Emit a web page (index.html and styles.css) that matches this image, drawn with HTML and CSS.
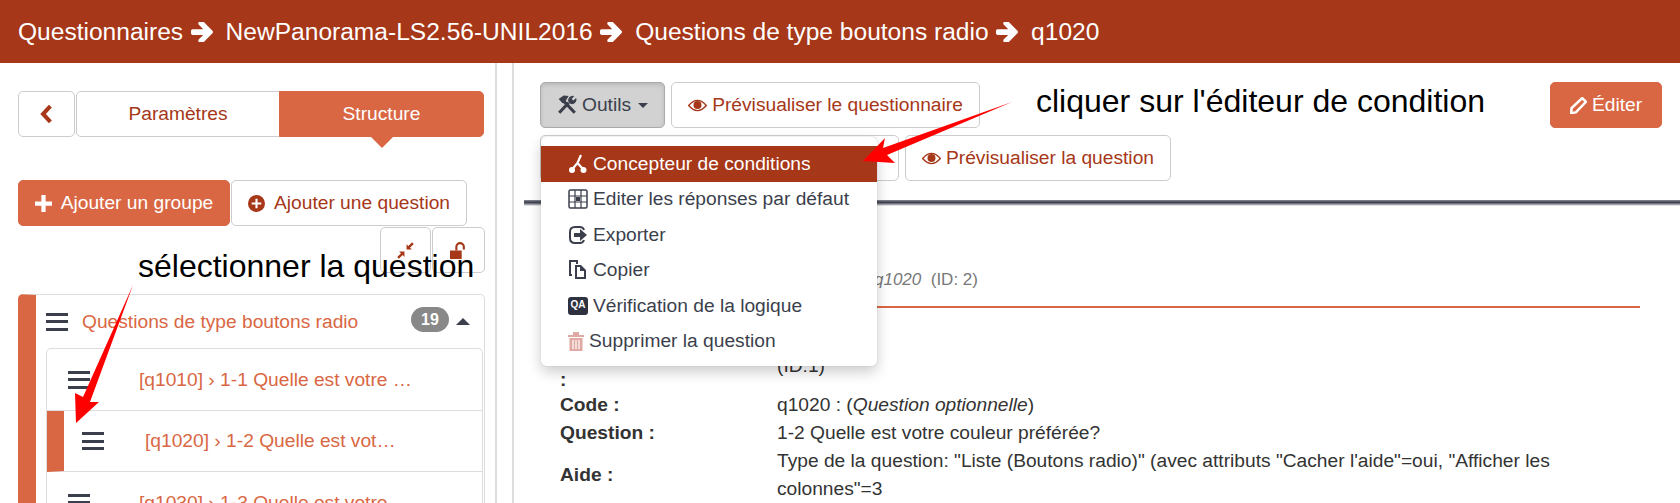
FILE: index.html
```html
<!DOCTYPE html>
<html lang="fr">
<head>
    <meta charset="UTF-8">
    <title>Questionnaires - q1020</title>
    <link rel="stylesheet" href="styles.css">
</head>

<body>
    <!-- fil d'ariane -->
    <header class="crumbs">
        <a>Questionnaires</a>
        <svg class="crumb-arrow" viewBox="64 192 1536 1280"><path d="M1600 960q0 54-37 91l-651 651q-39 37-91 37-51 0-90-37l-75-75q-38-38-38-91t38-91l293-293h-704q-52 0-84.5-37.5t-32.5-90.5v-128q0-53 32.5-90.5t84.5-37.5h704l-293-294q-38-36-38-90t38-90l75-75q38-38 90-38 53 0 91 38l651 651q37 35 37 90z" transform="translate(0 -128)"/></svg>
        <a>NewPanorama-LS2.56-UNIL2016</a>
        <svg class="crumb-arrow" viewBox="64 192 1536 1280"><path d="M1600 960q0 54-37 91l-651 651q-39 37-91 37-51 0-90-37l-75-75q-38-38-38-91t38-91l293-293h-704q-52 0-84.5-37.5t-32.5-90.5v-128q0-53 32.5-90.5t84.5-37.5h704l-293-294q-38-36-38-90t38-90l75-75q38-38 90-38 53 0 91 38l651 651q37 35 37 90z" transform="translate(0 -128)"/></svg>
        <a>Questions de type boutons radio</a>
        <svg class="crumb-arrow" viewBox="64 192 1536 1280"><path d="M1600 960q0 54-37 91l-651 651q-39 37-91 37-51 0-90-37l-75-75q-38-38-38-91t38-91l293-293h-704q-52 0-84.5-37.5t-32.5-90.5v-128q0-53 32.5-90.5t84.5-37.5h704l-293-294q-38-36-38-90t38-90l75-75q38-38 90-38 53 0 91 38l651 651q37 35 37 90z" transform="translate(0 -128)"/></svg>
        <a>q1020</a>
    </header>

    <div class="page">
        <!-- colonne de gauche -->
        <aside class="side">
            <div class="tabs">
                <button class="btn btn-back">
                    <svg class="ico ico-back" viewBox="0 0 12 16"><path d="M9 1 L2.5 8 L9 15" fill="none" stroke="currentColor" stroke-width="3.6"/></svg>
                </button>
                <button class="btn tab">Paramètres</button>
                <button class="btn tab tab-on">Structure</button>
            </div>

            <div class="adds">
                <button class="btn btn-fill btn-group">
                    <svg class="ico" viewBox="0 0 16 16"><path d="M6 0h4v6h6v4h-6v6h-4v-6h-6v-4h6z" fill="currentColor"/></svg>
                    Ajouter un groupe
                </button>
                <button class="btn btn-question">
                    <svg class="ico" viewBox="0 0 16 16"><circle cx="8" cy="8" r="8" fill="currentColor"/><path d="M7 3.5h2v3.500h3.500v2h-3.500v3.500h-2v-3.500h-3.500v-2h3.500z" fill="#fff"/></svg>
                    Ajouter une question
                </button>
            </div>

            <div class="tree-tools">
                <button class="btn btn-small">
                    <svg class="ico" viewBox="0 0 16 16"><path d="M15 1 L10.500 5.500 M1 15 L5.500 10.500" stroke="currentColor" stroke-width="2.200" fill="none"/><path d="M9 2v5h5zM2 9h5v5z" fill="currentColor"/></svg>
                </button>
                <button class="btn btn-small btn-lock">
                    <svg class="ico" viewBox="0 0 16 16"><path d="M0 8h11v8h-11z" fill="currentColor"/><path d="M6 8v-3.500a3.500 3.500 0 0 1 7 0v2.500" fill="none" stroke="currentColor" stroke-width="2"/></svg>
                </button>
            </div>

            <section class="group">
                <div class="group-head">
                    <span class="bars"></span>
                    <span class="group-title">Questions de type boutons radio</span>
                    <span class="badge">19</span>
                    <span class="caret-up"></span>
                </div>
                <ul class="questions">
                    <li class="q">
                        <span class="bars"></span>
                        <span class="q-label">[q1010] › 1-1 Quelle est votre …</span>
                    </li>
                    <li class="q q-on">
                        <span class="bars"></span>
                        <span class="q-label">[q1020] › 1-2 Quelle est vot…</span>
                    </li>
                    <li class="q">
                        <span class="bars"></span>
                        <span class="q-label">[q1030] › 1-3 Quelle est votre …</span>
                    </li>
                </ul>
            </section>
        </aside>

        <!-- colonne de droite -->
        <main class="main">
            <div class="bar">
                <div class="bar-row">
                    <button class="btn btn-tools">
                        <svg class="ico ico-tools" viewBox="0 0 18 18"><path d="M2 16 L10.500 7 M16 16 L6 5.500" stroke="currentColor" stroke-width="2.800" fill="none"/><path d="M1.500 3.500 L6 0.500 L10.500 1 L8 5 L5 7.500 z" fill="currentColor"/><path d="M10.500 6.500 a4 4 0 0 1 5 -5.500 l-2.300 2.500 l1.500 1.500 l2.500 -2.300 a4 4 0 0 1 -5.200 5.200 z" fill="currentColor"/></svg>
                        Outils <span class="caret"></span>
                    </button>
                    <button class="btn btn-line btn-preview">
                        <svg class="ico ico-eye" viewBox="0 0 20 14"><path d="M0.500 7 Q10 -4 19.500 7 Q10 18 0.500 7z" fill="none" stroke="currentColor" stroke-width="1.500"/><circle cx="10" cy="6.500" r="4.300" fill="currentColor"/></svg>
                        Prévisualiser le questionnaire
                    </button>
                    <button class="btn btn-fill btn-edit">
                        <svg class="ico" viewBox="0 0 16 16"><path d="M11.500 1 L15 4.500 L5.500 14.500 L1 15 L1.500 10.500 z" fill="none" stroke="currentColor" stroke-width="2.400"/></svg>
                        Éditer
                    </button>
                </div>
                <div class="bar-row">
                    <button class="btn btn-line btn-hidden"></button>
                    <button class="btn btn-line btn-preview-q">
                        <svg class="ico ico-eye" viewBox="0 0 20 14"><path d="M0.500 7 Q10 -4 19.500 7 Q10 18 0.500 7z" fill="none" stroke="currentColor" stroke-width="1.500"/><circle cx="10" cy="6.500" r="4.300" fill="currentColor"/></svg>
                        Prévisualiser la question
                    </button>
                </div>
            </div>
            <div class="bar-shadow"></div>

            <h2 class="summary"><em>q1020</em>&nbsp; (ID: 2)</h2>
            <div class="summary-line"></div>

            <dl class="facts">
                <dt class="facts-first">Groupe<br>:</dt>
                <dd class="facts-first">(ID:1)</dd>
                <dt>Code :</dt>
                <dd>q1020 : (<em>Question optionnelle</em>)</dd>
                <dt>Question :</dt>
                <dd>1-2 Quelle est votre couleur préférée?</dd>
                <dt>Aide :</dt>
                <dd>Type de la question: "Liste (Boutons radio)" (avec attributs "Cacher l'aide"=oui, "Afficher les colonnes"=3</dd>
            </dl>

            <!-- menu Outils ouvert -->
            <ul class="menu">
                <li class="menu-item menu-on">
                    <svg class="ico" viewBox="0 0 20 20"><path d="M13 1 L9.500 9 L4.500 15 M9.500 9 L15 15" fill="none" stroke="currentColor" stroke-width="2.200"/><circle cx="4" cy="16" r="3" fill="currentColor"/><circle cx="15.500" cy="16" r="3" fill="currentColor"/></svg>
                    Concepteur de conditions
                </li>
                <li class="menu-item">
                    <svg class="ico" viewBox="0 0 20 20"><rect x="1" y="1" width="18" height="18" rx="1.500" fill="none" stroke="currentColor" stroke-width="1.500"/><path d="M7 1v18M13 1v18M1 7h18M1 13h18" stroke="currentColor" stroke-width="1.200"/><rect x="8" y="8" width="4" height="4" fill="currentColor"/></svg>
                    Editer les réponses par défaut
                </li>
                <li class="menu-item">
                    <svg class="ico" viewBox="0 0 20 20"><path d="M16 5 Q15 2 12 2 H7 Q2 2 2 7 V13 Q2 18 7 18 H12 Q15 18 16 15" fill="none" stroke="currentColor" stroke-width="2"/><path d="M6 8h6v-4l7 6l-7 6v-4h-6z" fill="currentColor"/></svg>
                    Exporter
                </li>
                <li class="menu-item">
                    <svg class="ico" viewBox="0 0 20 20"><path d="M4 15 H2 V1 H9 V4" fill="none" stroke="currentColor" stroke-width="2"/><path d="M7 5 H13 L18 10 V19 H7 z M9 7 V17 H16 V11 H12 V7 z" fill="currentColor"/></svg>
                    Copier
                </li>
                <li class="menu-item">
                    <span class="qa">QA</span>
                    Vérification de la logique
                </li>
                <li class="menu-item menu-trash">
                    <svg class="ico" viewBox="0 0 16 20"><path d="M0 4h16v2h-16zM5 1h6v3h-6z M1.500 7h13v13h-13z" fill="currentColor"/><path d="M5 9v9M8 9v9M11 9v9" stroke="#fff" stroke-width="1.200"/></svg>
                    Supprimer la question
                </li>
            </ul>
        </main>
    </div>

    <!-- annotations de la capture -->
    <p class="note note-left">sélectionner la question</p>
    <p class="note note-right">cliquer sur l'éditeur de condition</p>
    <svg class="arrows" viewBox="0 0 1680 503">
        <polygon points="133,285 90,402 99,402 76,423 75,393 83,397"/>
        <polygon points="1012,102 887,155 895,163 863,161 885,138 883,148"/>
    </svg>
</body></html>
```

FILE: styles.css
```css
html,
body {
    margin: 0;
    padding: 0;
}

body {
    height: 503px;
    overflow: hidden;
    position: relative;
    background-color: #fff;
    color: #333;
    font: 19.200px/24px "Liberation Sans", Arial, sans-serif;
}

ul {
    margin: 0;
    padding: 0;
    list-style: none;
}

/* header */
.crumbs {
    display: flex;
    align-items: center;
    height: 63px;
    padding-left: 18px;
    background-color: #a63718;
    color: #fff;
    font-size: 24.550px;
}

.crumb-arrow {
    flex: none;
    width: 23px;
    height: 20px;
    margin: 0 13px 0 6.500px;
    fill: #fff;
}

.page {
    display: flex;
    height: 440px;
}

/* buttons */
.btn {
    display: flex;
    align-items: center;
    justify-content: center;
    gap: 5px;
    box-sizing: border-box;
    margin: 0;
    padding: 0;
    border: 1px solid #ccc;
    border-radius: 5px;
    background-color: #fff;
    color: #a63718;
    font: 19.200px/24px "Liberation Sans", Arial, sans-serif;
}

.btn-fill {
    border-color: #d96743;
    background-color: #d96743;
    color: #fff;
}

.ico {
    flex: none;
    width: 17px;
    height: 17px;
}

/* left column */
.side {
    flex: none;
    box-sizing: border-box;
    width: 497px;
    padding: 28px 10px 0 18px;
    border-right: 2px solid #ddd;
}

.tabs {
    display: flex;
    height: 46px;
}

.btn-back {
    width: 57px;
    margin-right: 1px;
}

.ico-back {
    width: 14px;
    height: 18px;
}

.tab {
    width: 204px;
    border-radius: 5px 0 0 5px;
}

.tab-on {
    position: relative;
    width: 205px;
    margin-left: -1px;
    border-color: #d96743;
    border-radius: 0 5px 5px 0;
    background-color: #d96743;
    color: #fff;
}

.tab-on::after {
    content: "";
    position: absolute;
    left: 91px;
    top: 45px;
    border: 11px solid transparent;
    border-top-color: #d96743;
    border-bottom: 0;
}

.adds {
    display: flex;
    gap: 1px;
    height: 46px;
    margin-top: 43px;
}

.btn-group {
    width: 212px;
    gap: 9px;
}

.btn-question {
    width: 236px;
    gap: 9px;
}

.tree-tools {
    display: flex;
    justify-content: flex-end;
    gap: 1px;
    height: 46px;
    margin-top: 1px;
}

.btn-small {
    width: 51px;
    border-radius: 5px;
}

.btn-lock {
    width: 53px;
}

.group {
    box-sizing: border-box;
    width: 467px;
    height: 300px;
    margin-top: 21px;
    border: 1px solid #ddd;
    border-left: 18px solid #d96743;
    border-radius: 5px 5px 0 0;
}

.group-head {
    display: flex;
    align-items: center;
    height: 53px;
    padding-left: 10px;
}

.bars {
    flex: none;
    box-sizing: border-box;
    width: 22px;
    height: 18px;
    border-top: 3px solid #3b3f4c;
    border-bottom: 3px solid #3b3f4c;
    position: relative;
}

.bars::after {
    content: "";
    position: absolute;
    left: 0;
    right: 0;
    top: 4.5px;
    height: 3px;
    background-color: #3b3f4c;
}

.group-title {
    margin-left: 14px;
    color: #d96743;
}

.badge {
    box-sizing: border-box;
    width: 38px;
    height: 25px;
    margin: -4px 0 0 auto;
    border-radius: 13px;
    background-color: #888;
    color: #fff;
    font-size: 16px;
    font-weight: bold;
    line-height: 25px;
    text-align: center;
}

.caret-up {
    margin: 0 14px 0 7px;
    border: 7.500px solid transparent;
    border-bottom-color: #3b3f4c;
    border-top: 0;
}

.questions {
    margin-right: 1px;
    border: 1px solid #ddd;
    border-radius: 5px 5px 0 0;
    margin-left: 10px;
}

.q {
    display: flex;
    align-items: center;
    box-sizing: border-box;
    height: 62px;
    padding-left: 21px;
    border-bottom: 1px solid #ddd;
}

.q-on {
    height: 61px;
    padding-left: 18px;
    border-left: 17px solid #d96743;
}

.q-label {
    margin-left: 49px;
    color: #d96743;
}

.q-on .q-label {
    margin-left: 41px;
}

/* right column */
.main {
    flex: 1;
    position: relative;
    margin-left: 15px;
    border-left: 2px solid #ddd;
}

.bar {
    display: flex;
    flex-direction: column;
    gap: 7px;
    height: 137px;
    box-sizing: border-box;
    padding: 19px 18px 0 26px;
}

.bar-row {
    display: flex;
    gap: 6px;
    height: 46px;
}

.btn-tools {
    width: 125px;
    border-color: #aaa;
    background-color: #d2d2d2;
    color: #3b3f4c;
    box-shadow: inset 0 2px 4px rgba(0, 0, 0, .12);
}

.ico-tools {
    width: 20px;
    height: 20px;
}

.caret {
    margin-left: 2px;
    border: 5px solid transparent;
    border-top-color: #3b3f4c;
    border-bottom: 0;
}

.btn-preview {
    width: 309px;
}

.ico-eye {
    width: 19px;
    height: 13px;
}

.btn-edit {
    width: 112px;
    margin-left: auto;
}

.btn-hidden {
    width: 359px;
}

.btn-preview-q {
    width: 266px;
}

.bar-shadow {
    height: 6px;
    margin-left: 10px;
    background: linear-gradient(#8a8c96, #3b3f4c 40%, #8f919a 70%, #fff);
}

.summary {
    margin: 62px 0 0;
    padding-left: 360px;
    color: #777;
    font-size: 17px;
    font-weight: normal;
    line-height: 24px;
}

.summary-line {
    height: 2px;
    margin: 14px 40px 0 363px;
    background-color: #d96743;
}

.facts {
    display: grid;
    grid-template-columns: 217px 785px;
    align-items: center;
    margin: 30px 0 0 46px;
    line-height: 28px;
}

.facts dt {
    font-weight: bold;
}

.facts dd {
    margin: 0;
}

.facts dt.facts-first,
.facts dd.facts-first {
    margin-bottom: -3px;
}

/* dropdown */
.menu {
    position: absolute;
    left: 27px;
    top: 74px;
    box-sizing: border-box;
    width: 336px;
    height: 229px;
    padding-top: 9px;
    border-radius: 5px;
    background-color: #fff;
    box-shadow: 0 6px 14px rgba(0, 0, 0, .2), 0 0 1px rgba(0, 0, 0, .3);
    color: #3b3f4c;
}

.menu-item {
    display: flex;
    align-items: center;
    gap: 5px;
    height: 35.500px;
    padding-left: 27px;
}

.menu-item .ico {
    width: 20px;
    height: 20px;
}

.menu-on {
    background-color: #a63718;
    color: #fff;
}

.qa {
    flex: none;
    width: 20px;
    height: 18px;
    border-radius: 3px;
    background-color: #2e3140;
    color: #fff;
    font-size: 10px;
    font-weight: bold;
    line-height: 15px;
    text-align: center;
}

.menu-trash .ico {
    width: 16px;
    color: #e0a9a4;
}

/* annotations */
.note {
    position: absolute;
    margin: 0;
    color: #000;
    font-size: 32px;
    line-height: 36px;
    white-space: nowrap;
}

.note-left {
    left: 138px;
    top: 248px;
}

.note-right {
    left: 1036px;
    top: 83px;
}

.arrows {
    position: absolute;
    left: 0;
    top: 0;
    width: 1680px;
    height: 503px;
    fill: #f00;
    pointer-events: none;
}
```
